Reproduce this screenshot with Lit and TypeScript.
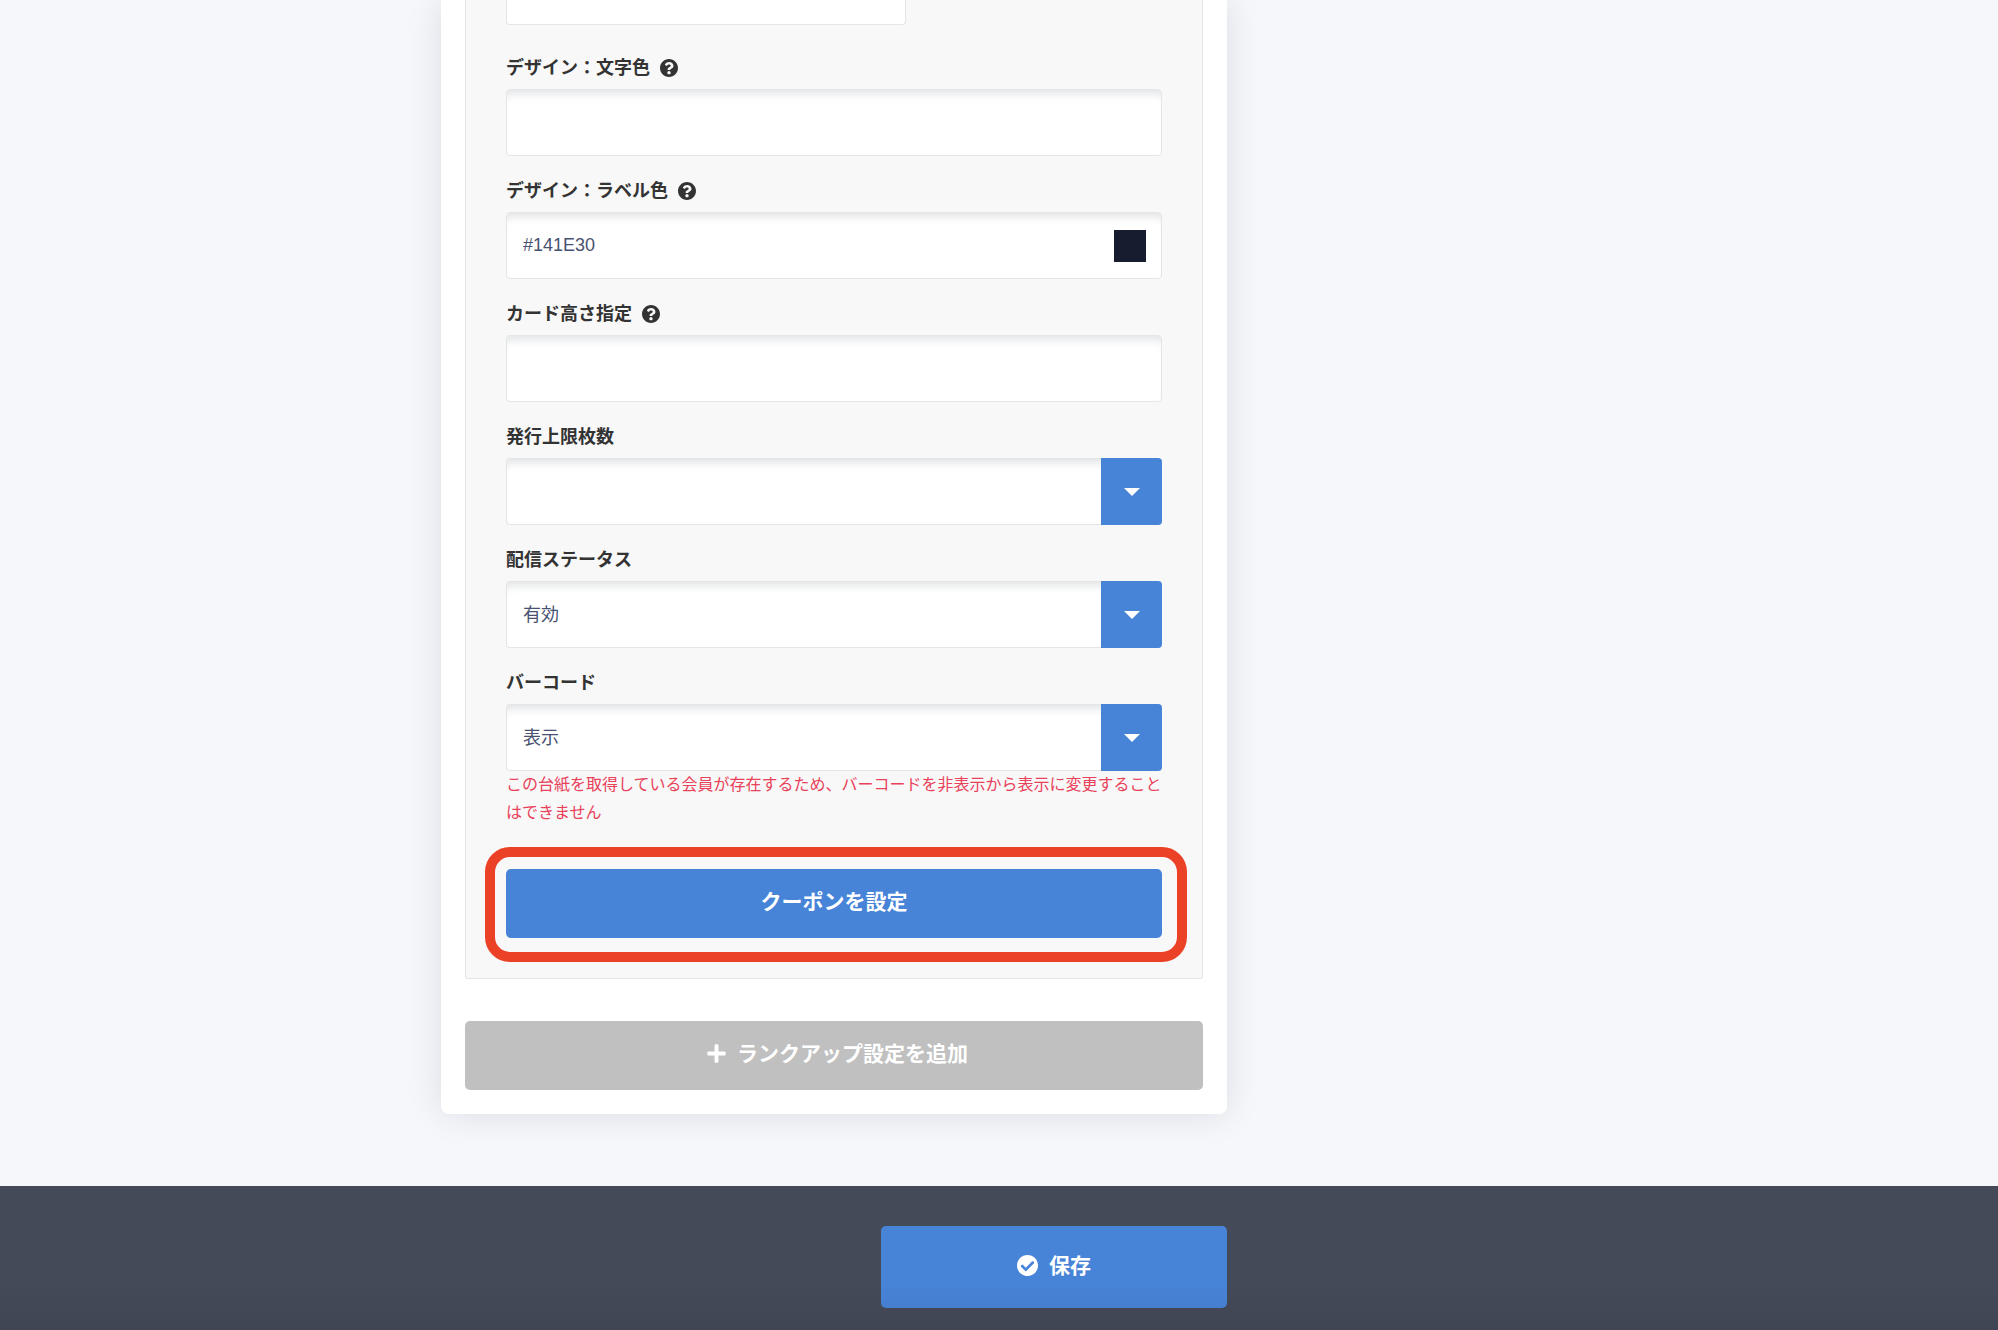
import { LitElement, html, css, svg } from "lit";
import { customElement } from "lit/decorators.js";

const helpIcon = html`<svg class="help" viewBox="8 8 496 496" role="img" aria-label="ヘルプ">
  ${svg`<path fill="currentColor" d="M504 256c0 136.997-111.043 248-248 248S8 392.997 8 256C8 119.083 119.043 8 256 8s248 111.083 248 248zM262.655 90c-54.497 0-89.255 22.957-116.549 63.758-3.536 5.286-2.353 12.415 2.715 16.258l34.699 26.31c5.205 3.947 12.621 3.008 16.665-2.122 17.864-22.658 30.113-35.797 57.303-35.797 20.429 0 45.698 13.148 45.698 32.958 0 14.976-12.363 22.667-32.534 33.976C247.128 238.528 216 254.941 216 296v4c0 6.627 5.373 12 12 12h56c6.627 0 12-5.373 12-12v-1.333c0-28.462 83.186-29.647 83.186-106.667 0-58.002-60.165-102-116.531-102zM256 338c-25.365 0-46 20.635-46 46 0 25.364 20.635 46 46 46s46-20.636 46-46c0-25.365-20.635-46-46-46z"/>`}
</svg>`;

const caret = html`<span class="caret" aria-hidden="true">
  <svg width="16" height="8" viewBox="0 0 16 8"><path d="M0 0h16L8 8z" fill="#fff"/></svg>
</span>`;

@customElement("app-root")
export class AppRoot extends LitElement {
  static styles = css`
    :host {
      display: flex;
      flex-direction: column;
      min-height: 100vh;
      background: #f5f7fb;
      color: #333;
      font-family: "Liberation Sans", "Noto Sans CJK JP", sans-serif;
      font-size: 18px;
    }
    * {
      box-sizing: border-box;
    }
    .columns {
      display: grid;
      grid-template-columns: 441fr 786fr 771fr;
    }
    .main {
      flex: 1;
      align-items: start;
      padding-bottom: 72px;
    }
    .card {
      grid-column: 2;
      background: #fff;
      border-radius: 0 0 8px 8px;
      box-shadow: 0 0 36px rgba(10, 12, 24, 0.11);
      padding: 0 24px 24px;
    }
    .panel {
      background: #f8f8f8;
      border: 1px solid #e5e5e5;
      border-top: 0;
      border-radius: 0 0 3px 3px;
      padding: 0 40px 40px;
      margin-bottom: 42px;
    }
    .group {
      margin-bottom: 21px;
    }
    .group.first {
      margin-bottom: 29px;
    }
    .label {
      display: flex;
      align-items: center;
      gap: 10px;
      line-height: 28px;
      margin-bottom: 7px;
      font-weight: 700;
    }
    .help {
      width: 18px;
      height: 18px;
    }
    .field {
      position: relative;
      display: flex;
      align-items: center;
      height: 67px;
      background: #fff;
      border: 1px solid #e5e5e5;
      border-radius: 4px;
      box-shadow: inset 0 10px 8px -6px rgba(20, 30, 48, 0.12);
    }
    .first .field {
      width: 61%;
      height: 25px;
      border-top: 0;
      border-radius: 0 0 4px 4px;
      box-shadow: none;
    }
    .control {
      flex: 1;
      min-width: 0;
      height: 100%;
      padding: 0 16px;
      border: 0;
      outline: 0;
      appearance: none;
      background: transparent;
      color: #475170;
      font: inherit;
    }
    .swatch {
      flex: none;
      width: 32px;
      height: 32px;
      margin-right: 15px;
      padding: 0;
      border: 0;
      appearance: none;
      background: none;
    }
    .swatch::-webkit-color-swatch-wrapper {
      padding: 0;
    }
    .swatch::-webkit-color-swatch {
      border: 0;
      border-radius: 0;
    }
    .select {
      border-right: 0;
    }
    .caret {
      position: absolute;
      inset: -1px 0 -1px auto;
      width: 61px;
      display: grid;
      place-items: center;
      background: #4784d8;
      border-radius: 0 4px 4px 0;
      pointer-events: none;
    }
    .note {
      margin: 0 0 42px;
      color: #e8415a;
      font-size: 16px;
      line-height: 28px;
    }
    .last {
      margin-bottom: 0;
    }
    .button {
      display: flex;
      align-items: center;
      justify-content: center;
      gap: 11px;
      width: 100%;
      height: 69px;
      padding: 0 0 7px;
      border: 0;
      border-radius: 5px;
      background: #4784d8;
      color: #fff;
      font: inherit;
      font-size: 21px;
      font-weight: 700;
    }
    .button svg {
      margin-top: 3px;
    }
    .button.add {
      padding-left: 7px;
      background: #c0c0c0;
    }
    .highlight {
      position: relative;
    }
    .highlight::after {
      content: "";
      position: absolute;
      inset: -22px -25px -24px -21px;
      border: 10px solid #eb4126;
      border-radius: 25px;
      pointer-events: none;
    }
    .footer {
      padding: 40px 0 22px;
      background: linear-gradient(#444a58 70%, #3f4553);
    }
    .button.save {
      grid-column: 2;
      justify-self: end;
      width: 44%;
      height: 82px;
      background: linear-gradient(#4784d8 60%, #467fd1);
    }
  `;

  private textField(id: string, label: string, content: unknown) {
    return html`<div class="group">
      <label class="label" for=${id}>${label}${helpIcon}</label>
      <div class="field">${content}</div>
    </div>`;
  }

  private selectField(id: string, label: string, value: string, extra = "") {
    return html`<div class="group ${extra}">
      <label class="label" for=${id}>${label}</label>
      <div class="field select">
        <select class="control" id=${id}><option>${value}</option></select>
        ${caret}
      </div>
    </div>`;
  }

  render() {
    return html`
      <main class="columns main">
        <section class="card">
          <div class="panel">
            <div class="group first">
              <div class="field"><input class="control" type="text" aria-label="デザイン" /></div>
            </div>
            ${this.textField("text-color", "デザイン：文字色", html`<input class="control" id="text-color" type="text" />`)}
            ${this.textField(
              "label-color",
              "デザイン：ラベル色",
              html`<input class="control" id="label-color" type="text" value="#141E30" />
                <input class="swatch" type="color" aria-label="ラベル色を選択" value="#171d2e" />`
            )}
            ${this.textField("card-height", "カード高さ指定", html`<input class="control" id="card-height" type="text" />`)}
            ${this.selectField("limit", "発行上限枚数", "")}
            ${this.selectField("status", "配信ステータス", "有効")}
            ${this.selectField("barcode", "バーコード", "表示", "last")}
            <p class="note">この台紙を取得している会員が存在するため、バーコードを非表示から表示に変更することはできません</p>
            <div class="highlight">
              <button class="button" type="button">クーポンを設定</button>
            </div>
          </div>
          <button class="button add" type="button">
            <svg width="19" height="21" viewBox="0 0 448 512" aria-hidden="true">
              <path fill="#fff" d="M416 208H272V64c0-17.67-14.33-32-32-32h-32c-17.67 0-32 14.33-32 32v144H32c-17.67 0-32 14.33-32 32v32c0 17.67 14.33 32 32 32h144v144c0 17.67 14.33 32 32 32h32c17.67 0 32-14.33 32-32V304h144c17.67 0 32-14.33 32-32v-32c0-17.67-14.33-32-32-32z" />
            </svg>
            ランクアップ設定を追加
          </button>
        </section>
      </main>
      <footer class="columns footer">
        <button class="button save" type="submit">
          <svg width="21" height="21" viewBox="8 8 496 496" aria-hidden="true">
            <path fill="#fff" d="M504 256c0 136.967-111.033 248-248 248S8 392.967 8 256 119.033 8 256 8s248 111.033 248 248zM227.314 387.314l184-184c6.248-6.248 6.248-16.379 0-22.627l-22.627-22.627c-6.248-6.249-16.379-6.249-22.628 0L216 308.118l-70.059-70.059c-6.248-6.248-16.379-6.248-22.628 0l-22.627 22.627c-6.248 6.248-6.248 16.379 0 22.627l104 104c6.249 6.249 16.379 6.249 22.628.001z" />
          </svg>
          保存
        </button>
      </footer>
    `;
  }
}
